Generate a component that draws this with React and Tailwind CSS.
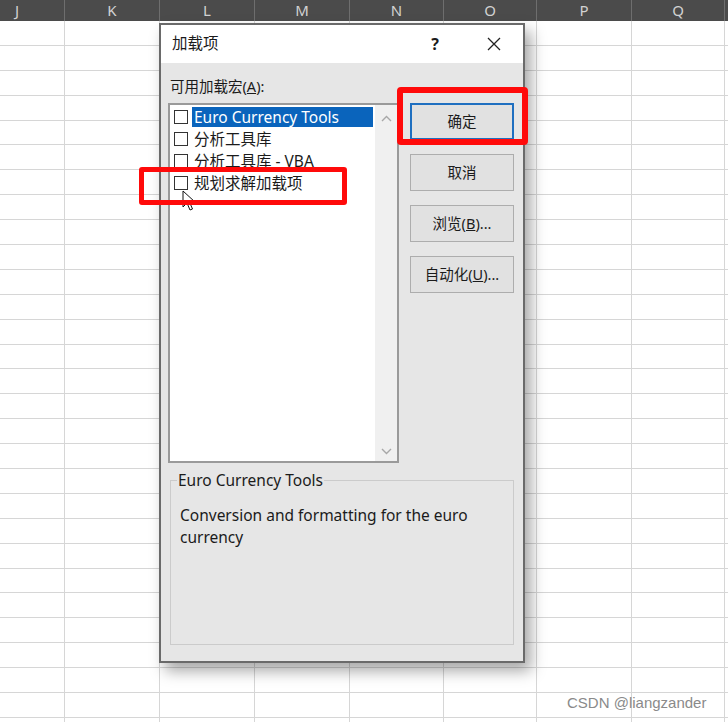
import React from "react";

const COLS = [
  { id: "J", w: "w-[95px]" },
  { id: "K", w: "w-[95px]" },
  { id: "L", w: "w-[95px]" },
  { id: "M", w: "w-[95px]" },
  { id: "N", w: "w-[94px]" },
  { id: "O", w: "w-[93px]" },
  { id: "P", w: "w-[95px]" },
  { id: "Q", w: "w-[93px]" },
  { id: "", w: "w-[95px]" },
];

const ROWS = Array.from({ length: 29 }, (_, i) => i);

const ADDINS = [
  { name: "Euro Currency Tools", selected: true },
  { name: "分析工具库" },
  { name: "分析工具库 - VBA" },
  { name: "规划求解加载项" },
];

const BUTTONS = [
  { label: "确定", focus: true },
  { label: "取消" },
  { label: "浏览(B)...", u: "B" },
  { label: "自动化(U)...", u: "U" },
];

const FONT = { fontFamily: '"Noto Sans", "Noto Sans CJK SC", sans-serif' };

function Sheet() {
  return (
    <div className="flex flex-col">
      {/* column header */}
      <div className="flex h-[21px] bg-[#4b4b4b] ml-[-30px]">
        {COLS.map((c, i) => (
          <div
            key={i}
            className={`${c.w} flex-shrink-0 h-full border-r border-[#6e6e6e] flex items-center justify-center text-[15px] text-[#d2d2d2]`}
          >
            {c.id}
          </div>
        ))}
      </div>
      {/* cells */}
      {ROWS.map((r) => (
        <div key={r} className="flex h-[24.9px] ml-[-30px]">
          {COLS.map((c, i) => (
            <div
              key={i}
              className={`${c.w} flex-shrink-0 h-full border-r border-b border-[#d6d6d6]`}
            />
          ))}
        </div>
      ))}
    </div>
  );
}

function Chevron({ up }) {
  return (
    <svg width="11" height="7" viewBox="0 0 11 7" className="text-[#a8a8a8]">
      <path
        d={up ? "M1 6 L5.5 1.5 L10 6" : "M1 1 L5.5 5.5 L10 1"}
        fill="none"
        stroke="currentColor"
        strokeWidth="1.4"
      />
    </svg>
  );
}

function Dialog() {
  return (
    <div
      className="absolute left-[159px] top-[23px] w-[366px] h-[640px] border-2 border-[#6a6a6a] bg-[#e6e6e6] shadow-[6px_8px_14px_rgba(0,0,0,0.35)] flex flex-col text-[#1b1b1b]"
      style={FONT}
    >
      {/* title bar */}
      <div className="h-[38px] bg-white flex items-center pl-[11px] flex-shrink-0">
        <span className="text-[15.5px]">加载项</span>
        <span className="ml-auto text-[16px] font-bold mr-[48px]">?</span>
        <svg width="14" height="14" viewBox="0 0 14 14" className="mr-[22px]">
          <path d="M1 1 L13 13 M13 1 L1 13" stroke="#222" strokeWidth="1.3" />
        </svg>
      </div>

      {/* body */}
      <div className="flex flex-col pl-[7px] pr-[8px]">
        <div className="h-[40px] flex items-center pl-[2px] pt-[8px] text-[14.5px]">
          可用加载宏(<span className="underline">A</span>):
        </div>

        <div className="flex">
          {/* list box */}
          <div className="w-[231px] h-[360px] border-2 border-[#9a9a9a] bg-white flex">
            <div className="flex-1 flex flex-col pl-[4px] pt-[1px]">
              {ADDINS.map((a) => (
                <div key={a.name} className="h-[22px] flex items-center">
                  <div className="w-[14px] h-[14px] border border-[#333] bg-white flex-shrink-0" />
                  <div
                    className={`ml-[4px] flex-1 h-[20px] leading-[20px] px-[2px] text-[15.5px] whitespace-nowrap ${
                      a.selected ? "bg-[#0a64bc] text-white" : ""
                    }`}
                  >
                    {a.name}
                  </div>
                </div>
              ))}
            </div>
            <div className="w-[22px] bg-[#f0f0f0] flex flex-col items-center justify-between pt-[10px] pb-[6px] ml-[2px]">
              <Chevron up />
              <Chevron />
            </div>
          </div>

          {/* buttons */}
          <div className="ml-[11px] w-[104px] flex flex-col gap-[14px]">
            {BUTTONS.map((b) => (
              <div
                key={b.label}
                className={`h-[37px] flex items-center justify-center text-[14.5px] bg-[#e1e1e1] ${
                  b.focus ? "border-2 border-[#1f6fc0]" : "border border-[#adadad]"
                }`}
              >
                {b.u ? (
                  <span>
                    {b.label.split(b.u)[0]}
                    <span className="underline">{b.u}</span>
                    {b.label.split(b.u)[1]}
                  </span>
                ) : (
                  b.label
                )}
              </div>
            ))}
          </div>
        </div>

        {/* group box */}
        <fieldset className="mt-[6px] ml-[2px] w-[344px] h-[176px] border border-[#cbcbcb] pl-[9px] pr-[8px]">
          <legend className="ml-[-3px] px-[1px] text-[15.5px] leading-[22px]">
            Euro Currency Tools
          </legend>
          <p className="pt-[13px] text-[15.5px] leading-[22px] w-[318px]">
            Conversion and formatting for the euro currency
          </p>
        </fieldset>
      </div>
    </div>
  );
}

export default function App() {
  return (
    <div className="relative w-[728px] h-[722px] overflow-hidden bg-white">
      <Sheet />
      <Dialog />

      {/* mouse cursor */}
      <svg
        width="14"
        height="22"
        viewBox="0 0 14 22"
        className="absolute left-[182px] top-[190px]"
      >
        <path
          d="M1 1 L1 17 L5 13 L8 20 L10.5 19 L7.5 12 L13 12 Z"
          fill="white"
          stroke="#111"
          strokeWidth="1"
          strokeLinejoin="round"
        />
      </svg>

      {/* annotation boxes */}
      <div className="absolute left-[397px] top-[87px] w-[131px] h-[58px] border-[6px] border-[#ff0a0a] rounded-[4px]" />
      <div className="absolute left-[139px] top-[167px] w-[208px] h-[38px] border-[5px] border-[#ff0a0a] rounded-[3px]" />

      {/* watermark */}
      <div
        className="absolute left-[567px] top-[693px] text-[15px] text-[#8a8a8a] leading-[20px]"
        style={{ fontFamily: '"Liberation Sans", Arial, sans-serif' }}
      >
        CSDN @liangzander
      </div>
    </div>
  );
}
